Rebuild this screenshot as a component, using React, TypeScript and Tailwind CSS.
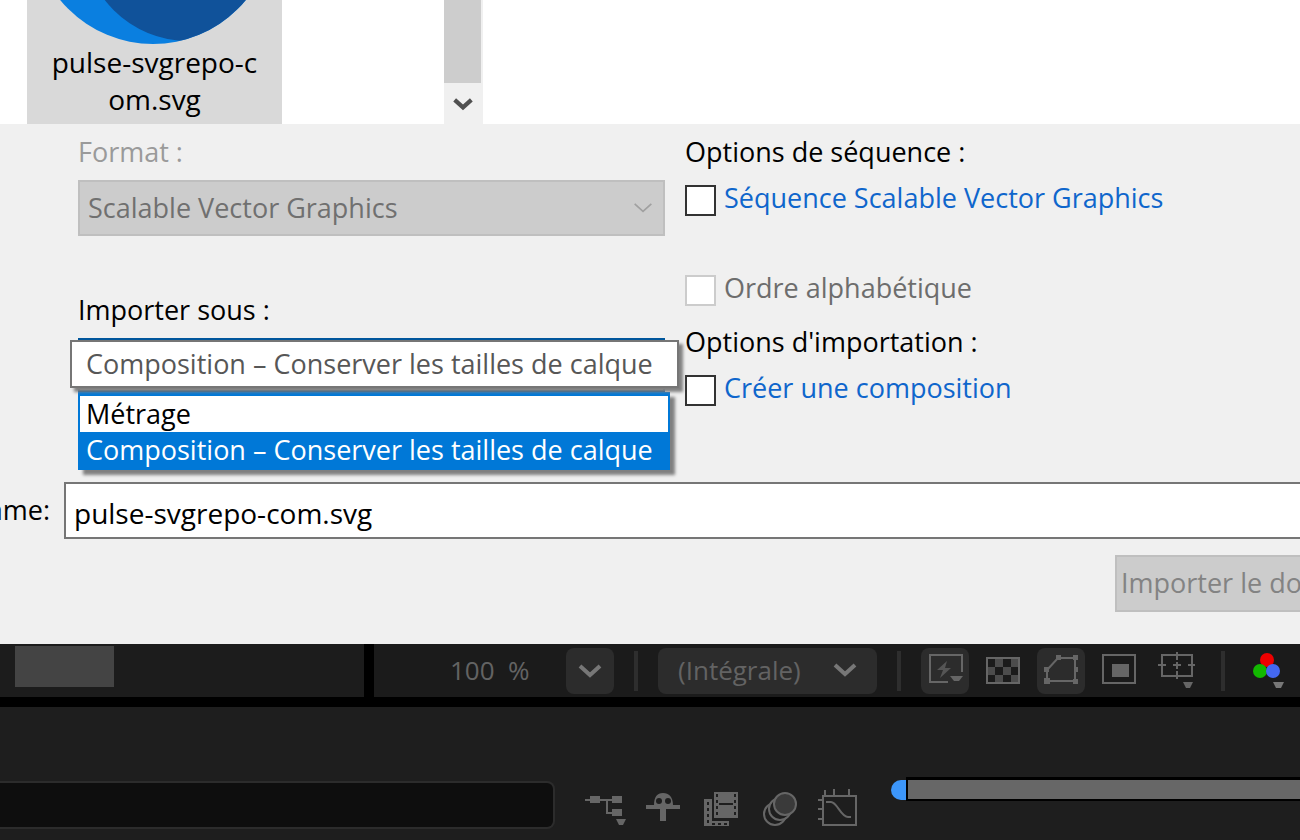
import { useState } from 'react';
import type { ReactNode } from 'react';

const importModes = ['Métrage', 'Composition – Conserver les tailles de calque'];

function Chevron({ className, width = 3 }: { className: string; width?: number }) {
  return (
    <svg viewBox="0 0 24 16" className={className} fill="none" stroke="currentColor" strokeWidth={width}>
      <path d="M2 3l10 9 10-9" />
    </svg>
  );
}

interface CheckOptionProps {
  id: string;
  label: string;
  disabled?: boolean;
}

function CheckOption({ id, label, disabled }: CheckOptionProps) {
  const [checked, setChecked] = useState(false);

  return (
    <div className="flex items-center h-9 gap-2">
      <input
        id={id}
        type="checkbox"
        checked={checked}
        disabled={disabled}
        onChange={() => setChecked(prev => !prev)}
        className="appearance-none w-[31px] h-[31px] mt-1 shrink-0 bg-white border-2 border-[#333] checked:bg-[#0078d7] disabled:border-[#ccc]"
      />
      <label htmlFor={id} className={disabled ? 'text-[#6d6d6d]' : 'text-[#0f66cc]'}>
        {label}
      </label>
    </div>
  );
}

function ToolButton({ label, active, children }: { label: string; active?: boolean; children: ReactNode }) {
  return (
    <button
      aria-label={label}
      className={`w-12 shrink-0 rounded-lg text-[#666] ${active ? 'bg-[#2c2c2c]' : ''}`}
    >
      <svg viewBox="0 0 48 46" className="w-full" fill="none" stroke="currentColor" strokeWidth="2">
        {children}
      </svg>
    </button>
  );
}

function Separator() {
  return <div className="w-1 h-10 shrink-0 bg-[#2e2e2e]" />;
}

function FileArea() {
  return (
    <div className="flex h-[124px] bg-white">
      <div className="w-[255px] ml-[27px] shrink-0 bg-[#d9d9d9] overflow-hidden">
        <svg viewBox="0 0 255 44" className="w-full h-11">
          <defs>
            <clipPath id="disc">
              <circle cx="126" cy="-76" r="120" />
            </clipPath>
          </defs>
          <circle cx="126" cy="-76" r="120" fill="#0a7fe0" />
          <circle cx="161" cy="-64" r="105" fill="#10529a" clipPath="url(#disc)" />
        </svg>
        <p className="text-center text-[28px] leading-[37px]">
          pulse-svgrepo-c
          <br />
          om.svg
        </p>
      </div>
      <div className="flex flex-col w-[39px] ml-[162px] shrink-0 bg-[#f0f0f0]">
        <div className="w-[37px] h-[83px] bg-[#cdcdcd]" />
        <div className="flex items-center justify-center flex-1 pr-0.5 text-[#505050]">
          <Chevron className="w-5 h-4" width={5} />
        </div>
      </div>
    </div>
  );
}

function ImportSelect() {
  const [mode, setMode] = useState(importModes[1]);

  return (
    <div className="relative">
      <select
        id="import-as"
        value={mode}
        onChange={(e) => setMode(e.target.value)}
        className="block appearance-none w-full h-[54px] px-2 bg-white border-2 border-[#00569c]"
      >
        {importModes.map(item => (
          <option key={item}>{item}</option>
        ))}
      </select>

      <ul
        role="listbox"
        className="absolute top-full left-0 z-10 w-[592px] border-2 border-t-4 border-[#0078d7] bg-white shadow-[5px_5px_3px_#808080]"
      >
        {importModes.map(item => (
          <li
            key={item}
            role="option"
            aria-selected={item === mode}
            onClick={() => setMode(item)}
            className={`h-9 leading-9 px-1.5 whitespace-nowrap ${
              item === mode ? 'bg-[#0078d7] text-white' : ''
            }`}
          >
            {item}
          </li>
        ))}
      </ul>

      {/* info-bulle au-dessus de la liste */}
      <div
        role="tooltip"
        className="absolute top-0.5 -left-2 z-20 w-[609px] h-12 leading-11 px-3.5 whitespace-nowrap border-2 border-[#767676] bg-white text-[#575757] shadow-[4px_4px_3px_#808080]"
      >
        {mode}
      </div>
    </div>
  );
}

function ImportDialog() {
  const [fileName, setFileName] = useState('pulse-svgrepo-com.svg');

  return (
    <section className="bg-[#f0f0f0] pt-2.5 pb-8 text-[27px]">
      <div className="flex gap-5 pl-[78px]">
        <div className="w-[587px] shrink-0">
          <label htmlFor="format" className="block h-9 leading-9 mb-2.5 text-[#9a9a9a]">Format :</label>
          <div className="relative">
            <select
              id="format"
              disabled
              className="block appearance-none w-full h-14 px-2 bg-[#ccc] border-2 border-[#bfbfbf] text-[#707070] opacity-100"
            >
              <option>Scalable Vector Graphics</option>
            </select>
            <Chevron className="absolute top-5 right-3 w-5 h-4 text-[#a0a0a0] pointer-events-none" width={2} />
          </div>
          <label htmlFor="import-as" className="block h-9 leading-9 mt-14 mb-2.5">Importer sous :</label>
          <ImportSelect />
        </div>

        <div className="flex-1 whitespace-nowrap">
          <p className="h-9 leading-9 mb-2.5">Options de séquence :</p>
          <CheckOption id="sequence" label="Séquence Scalable Vector Graphics" />
          <div className="mt-[54px] mb-[18px]">
            <CheckOption id="alphabetical" label="Ordre alphabétique" disabled />
          </div>
          <p className="h-9 leading-9 mb-2.5">Options d'importation :</p>
          <CheckOption id="composition" label="Créer une composition" />
        </div>
      </div>

      <div className="flex items-center mt-[76px]">
        <label htmlFor="file-name" className="flex justify-end w-16 pr-3.5 shrink-0">ame:</label>
        <input
          id="file-name"
          type="text"
          value={fileName}
          onChange={(e) => setFileName(e.target.value)}
          className="flex-1 min-w-0 h-[57px] px-2 pt-1 text-[28px] bg-white border-2 border-r-0 border-[#767676]"
        />
      </div>

      <div className="flex justify-end mt-4">
        <button
          disabled
          className="w-[185px] h-[57px] pl-1 text-left whitespace-nowrap overflow-hidden bg-[#ccc] border-2 border-r-0 border-[#bfbfbf] text-[#838383]"
        >
          Importer le dossier
        </button>
      </div>
    </section>
  );
}

function ViewerBar() {
  return (
    <div className="flex h-[53px] bg-black gap-2.5 overflow-hidden">
      <div className="w-[364px] shrink-0 bg-[#1c1c1c] pl-[15px] pt-0.5">
        <div className="w-[99px] h-[41px] bg-[#444]" />
      </div>
      <div className="flex flex-1 items-center bg-[#1b1b1b] text-[#636363]">
        <span className="w-24 ml-[76px] shrink-0 whitespace-pre">100  %</span>
        <button aria-label="Zoom" className="flex items-center justify-center w-12 h-[46px] ml-5 mr-5 shrink-0 rounded-lg bg-[#2c2c2c] text-[#777]">
          <Chevron className="w-6 h-4" width={4} />
        </button>
        <Separator />
        <div className="relative ml-5 mr-5 shrink-0">
          <select
            aria-label="Résolution"
            className="block appearance-none w-[219px] h-[46px] pl-5 rounded-lg bg-[#2c2c2c]"
          >
            <option>(Intégrale)</option>
          </select>
          <Chevron className="absolute top-3.5 right-5 w-6 h-4 text-[#777] pointer-events-none" width={4} />
        </div>
        <Separator />
        <div className="flex gap-2.5 ml-5 mr-5">
          <ToolButton label="Aperçus rapides" active>
            <path d="M41 24V7H9v27h18" />
            <path d="M26 13l-10 9h6l-3 8 11-10h-6z" fill="#555" stroke="none" />
            <path d="M29 28h13l-4 5h-5z" fill="currentColor" stroke="none" />
          </ToolButton>
          <ToolButton label="Grille de transparence">
            <path
              d="M16 11h8v8h-8zM32 11h7v8h-7zM9 19h7v8H9zM24 19h8v8h-8zM16 27h8v7h-8zM32 27h7v7h-7z"
              fill="#4c4c4c"
              stroke="none"
            />
            <rect x="8" y="10" width="32" height="25" />
          </ToolButton>
          <ToolButton label="Masques" active>
            <path d="M10 33V22L21 10h17v23z" />
            <path
              d="M7 30h6v6H7zM7 19h5v5H7zM19 7h5v5h-5zM36 7h5v5h-5zM36 31h5v5h-5zM37 19h4v5h-4z"
              fill="currentColor"
              stroke="none"
            />
          </ToolButton>
          <ToolButton label="Région ciblée">
            <rect x="8" y="7" width="32" height="28" />
            <rect x="17" y="16" width="17" height="13" fill="currentColor" stroke="none" />
          </ToolButton>
          <ToolButton label="Grille et repères">
            <rect x="9" y="7" width="30" height="21" />
            <path d="M24 4v8M24 14v7M24 23v8M5 17h8M20 17h8M35 17h7" />
            <path d="M30 34h10l-3 6h-4z" fill="currentColor" stroke="none" />
          </ToolButton>
        </div>
        <Separator />
        <button aria-label="Couches" className="w-9 ml-7 shrink-0 text-[#777]">
          <svg viewBox="0 0 36 46" className="w-full">
            <circle cx="14" cy="12" r="7" fill="#ee0000" />
            <circle cx="7" cy="23" r="7" fill="#12b800" />
            <circle cx="20" cy="23" r="7" fill="#4468f0" />
            <path d="M20 34h11l-3 6h-5z" fill="currentColor" />
          </svg>
        </button>
      </div>
    </div>
  );
}

function TimelinePanel() {
  return (
    <div className="flex flex-1 items-start bg-[#1e1e1e] border-t-10 border-black pt-[70px] pb-2">
      <input
        type="text"
        aria-label="Rechercher"
        className="w-[555px] h-12 mt-1 shrink-0 px-2 rounded-r-lg bg-[#0e0e0e] border-2 border-l-0 border-[#2c2c2c] text-[#777]"
      />
      <div className="flex gap-2.5 ml-[27px] mt-[5px]">
        <ToolButton label="Mini-diagramme">
          <path d="M3 18h28M25 18v13h6" />
          <path d="M8 14h10v7H8zM30 14h10v7H30zM30 27h10v7H30z" fill="currentColor" stroke="none" />
          <path d="M34 37h10l-3 6h-4z" fill="currentColor" stroke="none" />
        </ToolButton>
        <ToolButton label="Calques discrets">
          <path
            d="M14 23c0-8 3-12 9-12s10 4 10 12h7v4H26v12h-6V27H6v-4z"
            fill="currentColor"
            stroke="none"
          />
          <circle cx="19" cy="19" r="3" fill="#1e1e1e" stroke="none" />
          <circle cx="28" cy="19" r="3" fill="#1e1e1e" stroke="none" />
        </ToolButton>
        <ToolButton label="Fusion d'images">
          <path d="M16 10h24v26H16z" fill="currentColor" stroke="none" />
          <path d="M6 17h8v22h17v5H6z" fill="currentColor" stroke="none" />
          <path d="M19 12v23M37 12v23M10 20v22" stroke="#1e1e1e" strokeDasharray="3 3" />
          <path d="M21 22h14" stroke="#1e1e1e" />
          <path d="M14 42h16" stroke="#1e1e1e" strokeDasharray="3 3" />
        </ToolButton>
        <ToolButton label="Flou de mouvement">
          <circle cx="19" cy="32" r="11" />
          <circle cx="24" cy="27" r="11" fill="#1e1e1e" />
          <circle cx="29" cy="22" r="11" fill="#3a3a3a" />
        </ToolButton>
        <ToolButton label="Éditeur de graphiques">
          <rect x="9" y="14" width="33" height="29" />
          <path d="M11 8v6M20 7v7M35 7v7M4 18h5M4 27h5M4 37h5" />
          <path d="M12 20h5c6 0 10 15 17 15h3" />
        </ToolButton>
      </div>
      <div className="flex flex-1 ml-[29px]">
        <div className="w-[15px] h-5 mt-[3px] shrink-0 rounded-l-full bg-[#3c96fa]" />
        <div className="flex-1 h-6 bg-[#676767] border-l-2 border-t-3 border-b-2 border-black" />
      </div>
    </div>
  );
}

export default function App() {
  return (
    <div className="flex flex-col min-h-screen overflow-hidden bg-[#1e1e1e] text-black text-[26px] font-['Open_Sans','Noto_Sans',sans-serif]">
      <FileArea />
      <ImportDialog />
      <ViewerBar />
      <TimelinePanel />
    </div>
  );
}
